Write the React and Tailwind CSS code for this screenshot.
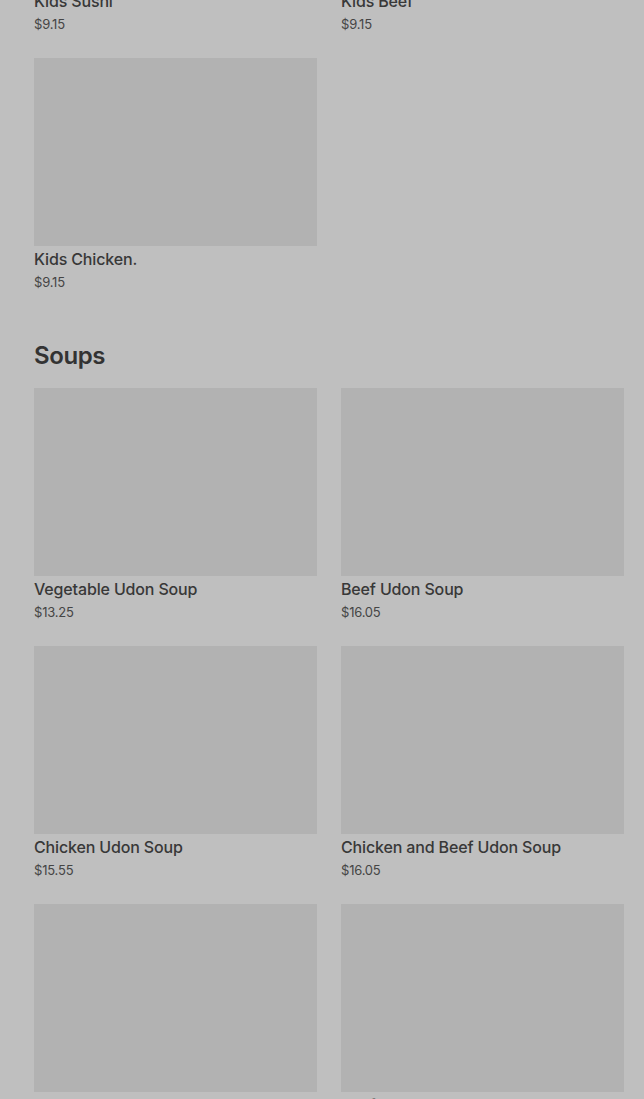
import React from 'react'

const kids = [
  { name: 'Kids Sushi', price: '$9.15' },
  { name: 'Kids Beef', price: '$9.15' },
  { name: 'Kids Chicken.', price: '$9.15' },
]

const soups = [
  { name: 'Vegetable Udon Soup', price: '$13.25' },
  { name: 'Beef Udon Soup', price: '$16.05' },
  { name: 'Chicken Udon Soup', price: '$15.55' },
  { name: 'Chicken and Beef Udon Soup', price: '$16.05' },
  { name: 'Tempura Udon Soup', price: '$15.55' },
  { name: 'Seafood Udon Soup', price: '$17.05' },
]

function MenuItem({ item }) {
  return (
    <div className="flex flex-col">
      <div className="h-[188px] bg-[#b2b2b2]" />
      <p className="mt-[2px] text-[16px] leading-[22px] font-medium tracking-[-0.15px] text-[#383838]">{item.name}</p>
      <p className="mt-[3px] text-[13px] leading-[18px] tracking-[-0.2px] text-[#454545]">{item.price}</p>
    </div>
  )
}

export default function App() {
  return (
    <div
      className="min-h-[1099px] bg-[#bfbfbf] pl-[34px] pr-[20px] overflow-hidden"
      style={{ fontFamily: 'Inter, "Open Sans", sans-serif' }}
    >
      {/* Kids section (scrolled) */}
      <div className="-mt-[200px] grid grid-cols-2 gap-x-[24px] gap-y-[25px]">
        {kids.map((item) => (
          <MenuItem key={item.name} item={item} />
        ))}
      </div>

      {/* Soups */}
      <h2 className="mt-[49px] text-[24px] leading-[32px] font-semibold tracking-[-0.4px] text-[#333333]">Soups</h2>
      <div className="mt-[16px] grid grid-cols-2 gap-x-[24px] gap-y-[25px]">
        {soups.map((item) => (
          <MenuItem key={item.name} item={item} />
        ))}
      </div>
    </div>
  )
}
